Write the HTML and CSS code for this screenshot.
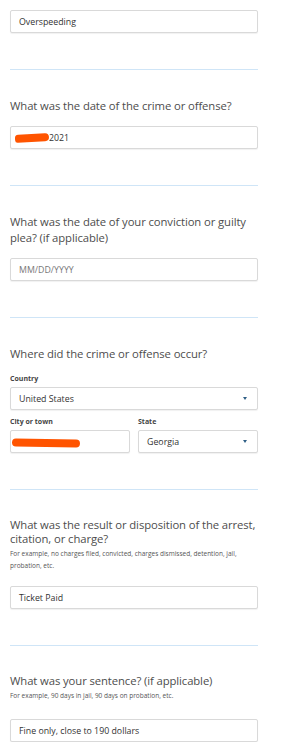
FILE: index.html
```html
<!DOCTYPE html>
<html>
<head>
<meta charset="utf-8">
<link rel="stylesheet" href="styles.css">
</head>
<body>
<div class="form">
  <div class="field"><span class="val">Overspeeding</span></div>
  <hr class="divider">

  <h2 class="q">What was the date of the crime or offense?</h2>
  <div class="field"><span class="redact r1"></span><span class="val">2021</span></div>
  <hr class="divider">

  <h2 class="q">What was the date of your conviction or guilty plea? (if applicable)</h2>
  <div class="field"><span class="ph">MM/DD/YYYY</span></div>
  <hr class="divider">

  <h2 class="q">Where did the crime or offense occur?</h2>
  <div class="lbl lbl-first">Country</div>
  <div class="field select"><span class="val">United States</span><span class="caret"></span></div>
  <div class="row">
    <div class="col">
      <div class="lbl">City or town</div>
      <div class="field"><span class="redact r2"></span></div>
    </div>
    <div class="col">
      <div class="lbl">State</div>
      <div class="field select"><span class="val">Georgia</span><span class="caret"></span></div>
    </div>
  </div>
  <hr class="divider">

  <h2 class="q q-tight">What was the result or disposition of the arrest, citation, or charge?</h2>
  <p class="hint">For example, no charges filed, convicted, charges dismissed, detention, jail, probation, etc.</p>
  <div class="field"><span class="val">Ticket Paid</span></div>
  <hr class="divider">

  <h2 class="q q-tight">What was your sentence? (if applicable)</h2>
  <p class="hint hint-last">For example, 90 days in jail, 90 days on probation, etc.</p>
  <div class="field"><span class="val">Fine only, close to 190 dollars</span></div>
</div>
</body>
</html>
```

FILE: styles.css
```css
html, body {
  margin: 0;
  padding: 0;
  background: #ffffff;
}
body {
  font-family: "Open Sans", "Liberation Sans", sans-serif;
  color: #444;
}
.form {
  width: 248px;
  padding: 10px 0 0 10px;
  display: flex;
  flex-direction: column;
}
.field {
  box-sizing: border-box;
  height: 23px;
  border: 1px solid #d9d9d9;
  border-radius: 2px;
  box-shadow: 0 1px 1px rgba(0,0,0,0.06);
  display: flex;
  align-items: center;
  padding: 0 8px;
  font-size: 8.8px;
  color: #333;
  position: relative;
  background: #fff;
}
.field .ph {
  color: #777;
}
.select {
  justify-content: space-between;
}
.caret {
  width: 0;
  height: 0;
  border-left: 2.5px solid transparent;
  border-right: 2.5px solid transparent;
  border-top: 3px solid #2f5f86;
  margin-right: 2px;
}
.divider {
  border: 0;
  height: 1px;
  background: #cfe5f7;
  margin: 36px 0 0 0;
  width: 248px;
}
.q {
  font-size: 11.3px;
  font-weight: 400;
  line-height: 16px;
  color: #4d4d4d;
  margin: 28px 0 12px 0;
  letter-spacing: -0.1px;
}
.q-tight {
  line-height: 14px;
  margin-bottom: 2px;
}
.hint {
  font-size: 6.5px;
  line-height: 12px;
  color: #555;
  margin: 0 0 14px 0;
}
.hint-last {
  margin-bottom: 17px;
}
.lbl {
  font-size: 7px;
  font-weight: 700;
  color: #444;
  line-height: 10px;
  margin: 0 0 3px 0;
}
.lbl-first {
  margin-top: 0;
}
.row {
  display: flex;
  gap: 8px;
  margin-top: 7px;
}
.col {
  flex: 1;
  display: flex;
  flex-direction: column;
}
.redact {
  display: inline-block;
  background: #ff5400;
  border-radius: 6px;
}
.r1 {
  width: 34px;
  height: 8px;
  margin-left: -4px;
  border-radius: 5px 6px 6px 4px;
  transform: rotate(-3deg);
}
.r2 {
  width: 68px;
  height: 8px;
  margin-left: -7px;
  margin-top: 2px;
  border-radius: 5px 5px 5px 5px;
  transform: rotate(1deg);
}
```
